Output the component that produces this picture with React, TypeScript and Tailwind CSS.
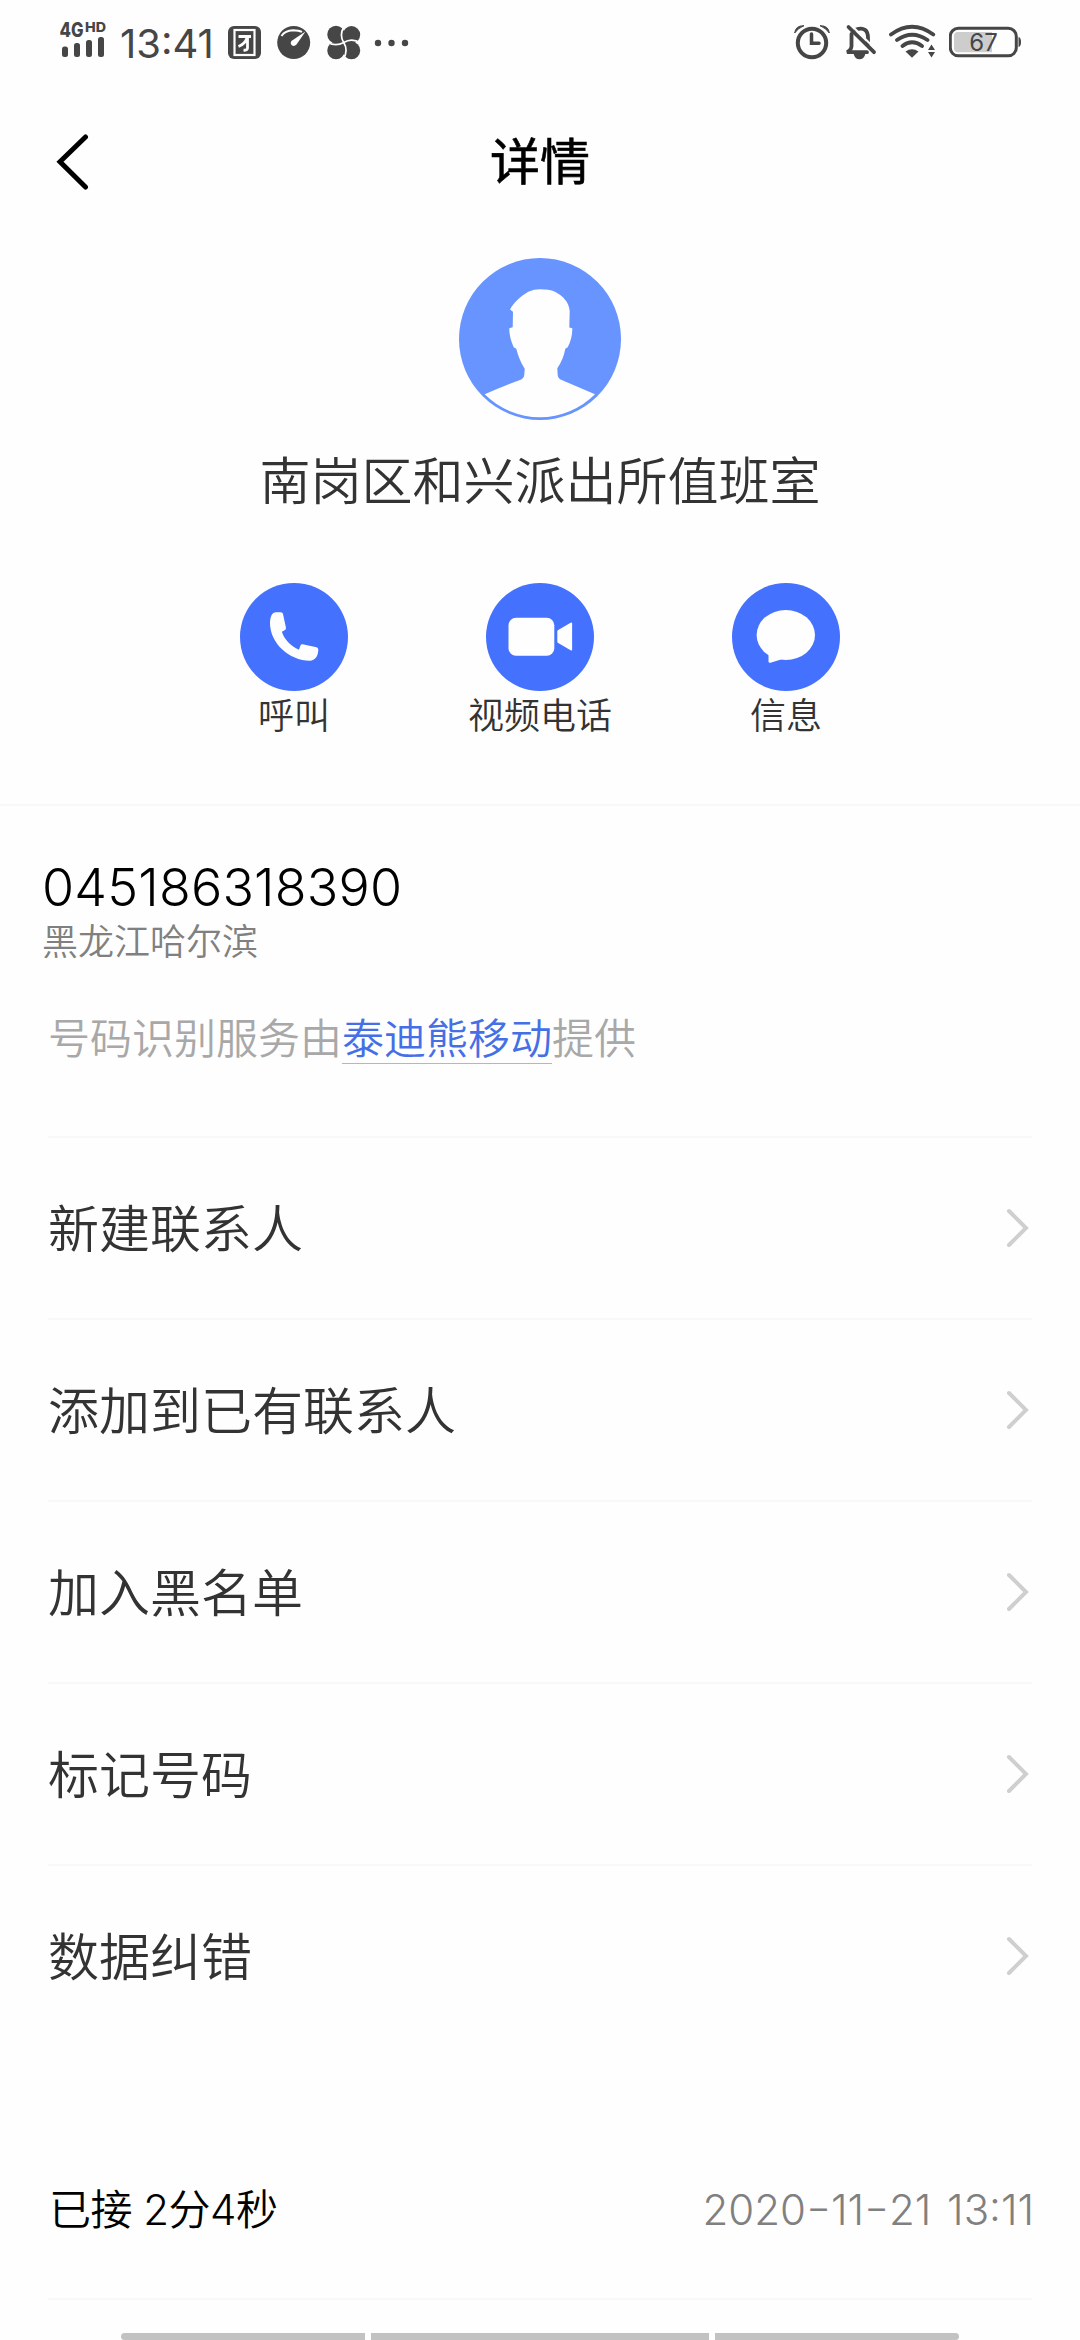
import React from 'react';

const actions = [
  {
    label: '呼叫',
    icon: (
      <path d="M30 40C30 34 32 29.3 36 29.3H40.8Q42.8 29.3 43 31L45.9 44.6Q46.3 46.2 45 47L41.9 48.7C44 56 51 63.500 58.9 66.700L60.600 62.200Q61.100 61 62.500 61.300L76.500 64.300Q78.300 64.800 78.300 66.500C78.300 73 75 77.700 70 77.700C49 77.700 30 60 30 40Z" />
    ),
  },
  {
    label: '视频电话',
    icon: (
      <>
        <rect x="22.500" y="34.700" width="45.800" height="38" rx="7.500" />
        <path d="M71.300 48.500Q71.300 47.500 72.200 46.900L84.600 39.700Q86.100 39 86.100 40.500V66.500Q86.100 68 84.600 67.300L72.200 60.100Q71.300 59.500 71.300 58.500Z" />
      </>
    ),
  },
  {
    label: '信息',
    icon: (
      <>
        <ellipse cx="53.800" cy="52" rx="29.200" ry="25" />
        <path d="M36.500 69V78.500Q36.700 80.300 38.500 79.700L49 76.500Z" />
      </>
    ),
  },
];

const menuItems = ['新建联系人', '添加到已有联系人', '加入黑名单', '标记号码', '数据纠错'];

function StatusBar() {
  return (
    <div className="flex h-[90px] items-start justify-between pl-[60px] pr-[59px] text-[#464646]">
      <div className="flex items-start">
        <svg width="48" height="64" viewBox="60 0 48 64" fill="currentColor">
          <text x="59.500" y="36.500" fontSize="20" fontWeight="800" textLength="24" lengthAdjust="spacingAndGlyphs">4G</text>
          <text x="85" y="32" fontSize="13.500" fontWeight="800" textLength="21" lengthAdjust="spacingAndGlyphs">HD</text>
          <rect x="62" y="46.500" width="6" height="10.500" rx="2.500" />
          <rect x="74" y="43" width="6" height="14" rx="2.500" />
          <rect x="86" y="40" width="6" height="17" rx="2.500" />
          <rect x="98" y="37" width="6" height="20" rx="2.500" />
        </svg>
        <span className="ml-[12px] mt-[20px] w-[108px] whitespace-nowrap text-[40px] leading-[48px]">13:41</span>

        {/* notification icons */}
        <svg width="34" height="64" viewBox="228 0 34 64" fill="none" stroke="#fefefe">
          <rect x="228" y="26" width="33" height="33" rx="6" fill="#464646" stroke="none" />
          <rect x="234.500" y="30" width="20" height="25" strokeWidth="2.200" />
          <path d="M238.500 36.500H251M247.500 35V48Q247.500 50.500 243.500 50.200M247 38Q245 44 238.500 46.500" strokeWidth="2.800" />
        </svg>
        <svg className="ml-[15px]" width="34" height="64" viewBox="277 0 34 64" fill="none">
          <circle cx="293.700" cy="42.500" r="16.500" fill="#464646" />
          <path d="M281.500 36Q285 30.500 293 30.300Q299 30.300 302 32" stroke="#fefefe" strokeWidth="2" />
          <path d="M305.500 31.500L296.500 44.500Q294 47 291.500 45Q289.500 42.500 292.500 40.300Z" fill="#fefefe" />
        </svg>
        <svg className="ml-[16px]" width="34" height="64" viewBox="327 0 34 64">
          <g fill="#464646">
            <circle cx="336" cy="34.500" r="8.700" />
            <circle cx="351.500" cy="34.800" r="8.700" />
            <circle cx="336" cy="50.500" r="8.700" />
            <circle cx="351.500" cy="50.500" r="8.700" />
            <rect x="336" y="35" width="15" height="15" />
          </g>
          <path d="M343.700 42.500Q339 35 344 26.500M343.700 42.500Q335.500 47 327 42M343.700 42.500Q348.500 50 343.500 59M343.700 42.500Q352 37.500 360.500 43" fill="none" stroke="#fefefe" strokeWidth="1.700" />
        </svg>
        <svg className="ml-[13px]" width="36" height="64" viewBox="374 0 36 64" fill="currentColor">
          <circle cx="378" cy="43" r="3.200" />
          <circle cx="391.500" cy="43" r="3.200" />
          <circle cx="405" cy="43" r="3.200" />
        </svg>
      </div>

      <div className="flex items-start">
        <svg width="36" height="64" viewBox="793 0 36 64" fill="none" stroke="currentColor">
          <circle cx="811" cy="43" r="14.200" strokeWidth="4" />
          <path d="M810.500 34V43.200H818" strokeWidth="3.500" strokeLinecap="round" />
          <path d="M793.700 33Q794.500 25.500 803 25.700Q797 28 793.700 33ZM828.300 33Q827.500 25.500 819 25.700Q825 28 828.300 33Z" fill="currentColor" strokeWidth="1" />
        </svg>
        <svg className="ml-[15px]" width="32" height="64" viewBox="844 0 32 64" fill="none" stroke="currentColor" strokeWidth="3.800" strokeLinecap="round">
          <path d="M850.500 34V46Q850.500 50 846 52.200H866M855 29.500Q867 26 867 38V44" />
          <path d="M853.500 54Q854.500 58.500 858.500 58.500Q862.500 58.500 863.500 54Z" fill="currentColor" strokeWidth="1.500" />
          <path d="M850.500 25.500L877 51.500" stroke="#fefefe" strokeWidth="2" />
          <path d="M847.500 27L873 52.200" />
        </svg>
        <svg className="ml-[12px]" width="48" height="64" viewBox="888 0 48 64" fill="none" stroke="currentColor" strokeWidth="3.800" strokeLinecap="round">
          <path d="M890 34.500Q911 19 932.300 34.500M896 40Q911 29.500 926.500 40M901.500 46Q911 38.500 921 46" />
          <path d="M904.500 51.500Q911 47 917.500 51.500L911 57.700Z" fill="currentColor" stroke="none" />
          <path d="M930.500 44.500L934 50H927ZM927 52H934L930.500 57.500Z" fill="currentColor" stroke="none" />
        </svg>
        <svg className="ml-[12px]" width="72" height="64" viewBox="948 0 72 64">
          <rect x="949.300" y="28.300" width="66" height="27.500" rx="8" fill="none" stroke="currentColor" strokeWidth="3" />
          <path d="M957 32H991V52.300H957Q953 52.300 953 48V36Q953 32 957 32Z" fill="#cdcdcd" />
          <path d="M1017.500 37Q1020 37.500 1020 42Q1020 46.500 1017.500 47Z" fill="currentColor" />
          <text x="982.500" y="51" fontSize="24" textAnchor="middle" fill="currentColor">67</text>
        </svg>
      </div>
    </div>
  );
}

function Avatar() {
  return (
    <svg width="162" height="162" viewBox="0 0 162 162">
      <circle cx="81" cy="81" r="81" fill="#6794ff" />
      <path
        d="M51 51.500C55 44 62 38 69.300 33.700Q75 31.300 81 31.300Q90 31.300 96 33.700C104 38 110 44 110.700 53L110.300 69.500L113.300 70.200Q113.500 80 108.700 89.300L106.300 90.700Q104.500 101 98.300 110.300L98.700 117Q99 120.500 102.700 122L136 136.300A78 78 0 0 1 25.700 136.300Q43 128.500 61 122Q64.800 120.500 65.300 117L65.700 110.700Q60 102 57.300 90.700L54.700 89.300Q50 79 50.300 70.300L53.700 69.300L54 53.700Z"
        fill="#fefefe"
      />
    </svg>
  );
}

function Dash() {
  return <span className="mx-[3px] inline-block scale-x-130">-</span>;
}

export default function App() {
  return (
    <div className="flex h-[2340px] w-[1080px] flex-col overflow-hidden bg-[#fefefe] font-['Inter','Noto_Sans_CJK_SC',sans-serif]">
      <StatusBar />

      {/* Title bar */}
      <header className="grid h-[144px] grid-cols-3 items-center px-[56px] text-black">
        <svg width="34" height="56" viewBox="0 0 34 56" fill="none" stroke="currentColor" strokeWidth="5" strokeLinecap="round">
          <path d="M29.500 3L4 27.700L29.500 53" />
        </svg>
        <h1 className="text-center text-[50px] font-normal leading-[60px] [-webkit-text-stroke:0.6px_black]">详情</h1>
      </header>

      {/* Contact summary */}
      <section className="flex h-[572px] flex-col items-center border-b-2 border-[#f8f8f8] pt-[24px] text-[#333333]">
        <Avatar />
        <h2 className="mt-[26px] text-[51px] font-[350] leading-[72px]">南岗区和兴派出所值班室</h2>
        <div className="mt-[65px] grid w-[738px] grid-cols-3">
          {actions.map((action) => (
            <div key={action.label} className="flex flex-col items-center">
              <svg width="108" height="108" viewBox="0 0 108 108" fill="#fefefe">
                <circle cx="54" cy="54" r="54" fill="#4571ff" />
                {action.icon}
              </svg>
              <span className="text-[36px] font-[350] leading-[50px]">{action.label}</span>
            </div>
          ))}
        </div>
      </section>

      {/* Number */}
      <section className="h-[330px] pt-[51px]">
        <div className="pl-[42px] text-[52px] font-light leading-[62px] tracking-[0.2px] text-black">045186318390</div>
        <div className="pl-[42px] text-[36px] font-[350] leading-[46px] text-[#808080]">黑龙江哈尔滨</div>
        <div className="mt-[49px] flex pl-[48px] text-[42px] font-[350] leading-[50px] text-[#a8a8a8]">
          <span>号码识别服务由</span>
          <span className="h-[50px] border-b border-[#a3b8e3] text-[#456fe6]">泰迪熊移动</span>
          <span>提供</span>
        </div>
      </section>

      {/* Menu */}
      <ul className="px-[48px]">
        {menuItems.map((item) => (
          <li key={item} className="flex h-[182px] items-center justify-between border-t-2 border-[#f8f8f8] pr-[3px]">
            <span className="pt-[4px] text-[51px] font-[350] leading-[72px] text-[#333333]">{item}</span>
            <svg width="24" height="40" viewBox="0 0 24 40" fill="none" stroke="#cfcfcf" strokeWidth="4" strokeLinecap="round">
              <path d="M4 3L21 20L4 37" />
            </svg>
          </li>
        ))}
      </ul>

      {/* Call record */}
      <section className="mx-[48px] mt-[74px] flex h-[180px] items-center justify-between border-b-2 border-[#f8f8f8] text-[42px] font-[350]">
        <span className="pl-px tracking-[-0.5px] text-black">已接 2分4秒</span>
        <span className="-mr-[2px] font-light text-[#808080] [font-feature-settings:'case'] [word-spacing:4px]">
          2020<Dash />11<Dash />21 13:11
        </span>
      </section>

      {/* Navigation gesture bars */}
      <div className="mt-auto flex h-[7px] gap-[6px] px-[121px]">
        <div className="w-[244px] rounded-l-full bg-[#c2c2c2]" />
        <div className="flex-1 bg-[#c2c2c2]" />
        <div className="w-[244px] rounded-r-full bg-[#c2c2c2]" />
      </div>
    </div>
  );
}
